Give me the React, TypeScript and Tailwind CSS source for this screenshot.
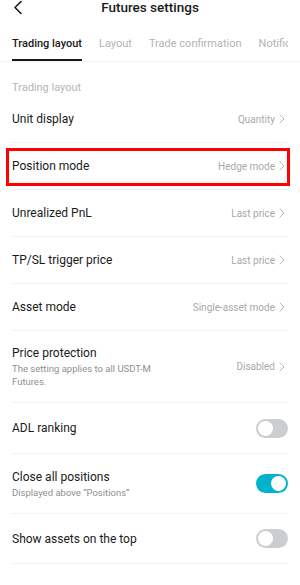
import React from "react";

const Chevron = () => (
  <svg width="6" height="10" viewBox="0 0 6 10" fill="none" className="ml-[4px] mr-[3px]">
    <path d="M1 1l4 4-4 4" stroke="#b8b8b8" strokeWidth="1" strokeLinecap="round" strokeLinejoin="round" />
  </svg>
);

const Toggle = ({ on }: { on: boolean }) => (
  <div className={`w-[32px] h-[19px] rounded-full p-[2px] flex items-center ${on ? "bg-[#00b3cc] justify-end" : "bg-[#cbcdd0] justify-start"}`}>
    <div className="w-[15px] h-[15px] rounded-full bg-white" />
  </div>
);

const NavRow = ({ label, value, boxed }: { label: string; value: string; boxed?: boolean }) => (
  <div className="relative h-[47px] flex items-center justify-between border-b border-[#f2f2f2]">
    <span className="text-[12px] text-[#1a1a1a]">{label}</span>
    <span className="flex items-center text-[10px] text-[#a9a9a9]">
      {value}
      <Chevron />
    </span>
    {boxed && <div className="absolute left-[-6px] top-[5px] w-[284px] h-[38px] border-[3px] border-[#ff0000]" />}
  </div>
);

export default function App() {
  return (
    <div className="w-[300px] h-[585px] bg-white overflow-hidden" style={{ fontFamily: "Roboto, 'Noto Sans', sans-serif" }}>
      <div className="relative h-[15px] flex items-center justify-center">
        <svg className="absolute left-[13px] top-[0px]" width="10" height="15" viewBox="0 0 10 15" fill="none">
          <path d="M8 1.5L2 7.5l6 6" stroke="#1a1a1a" strokeWidth="1.6" strokeLinecap="round" strokeLinejoin="round" />
        </svg>
        <span className="text-[13.5px] font-medium text-[#1a1a1a]">Futures settings</span>
      </div>
      <div className="mt-[12px] h-[35px] border-b border-[#f2f2f2] pl-3 pr-3">
        <div className="h-full flex items-stretch gap-[17px] whitespace-nowrap overflow-hidden">
          <div className="relative flex items-center text-[11px] font-medium text-[#1a1a1a]">
            Trading layout
            <div className="absolute left-0 right-0 bottom-0 h-[2px] bg-[#1a1a1a]" />
          </div>
          <div className="flex items-center text-[11px] text-[#b3b3b3]">Layout</div>
          <div className="flex items-center text-[11px] text-[#b3b3b3]">Trade confirmation</div>
          <div className="flex items-center text-[11px] text-[#b3b3b3]">Notifications</div>
        </div>
      </div>
      <div className="px-3">
        <div className="h-[34px] flex items-end text-[11px] text-[#b5b5b5]">Trading layout</div>
        <NavRow label="Unit display" value="Quantity" />
        <NavRow label="Position mode" value="Hedge mode" boxed />
        <NavRow label="Unrealized PnL" value="Last price" />
        <NavRow label="TP/SL trigger price" value="Last price" />
        <NavRow label="Asset mode" value="Single-asset mode" />
        <div className="h-[72px] flex items-center justify-between border-b border-[#f2f2f2]">
          <div className="flex flex-col w-[145px]">
            <span className="text-[12px] text-[#1a1a1a] leading-[16px]">Price protection</span>
            <span className="text-[9.5px] text-[#8f8f8f] leading-[13px] mt-[1px]">The setting applies to all USDT-M Futures.</span>
          </div>
          <span className="flex items-center text-[10px] text-[#a9a9a9]">
            Disabled
            <Chevron />
          </span>
        </div>
        <div className="h-[51px] flex items-center justify-between border-b border-[#f2f2f2]">
          <span className="text-[12px] text-[#1a1a1a]">ADL ranking</span>
          <Toggle on={false} />
        </div>
        <div className="h-[60px] flex items-center justify-between border-b border-[#f2f2f2]">
          <div className="flex flex-col">
            <span className="text-[12px] text-[#1a1a1a] leading-[16px]">Close all positions</span>
            <span className="text-[9.5px] text-[#8f8f8f] leading-[13px] mt-[1px]">Displayed above “Positions”</span>
          </div>
          <Toggle on />
        </div>
        <div className="h-[50px] flex items-center justify-between border-b border-[#f2f2f2]">
          <span className="text-[12px] text-[#1a1a1a]">Show assets on the top</span>
          <Toggle on={false} />
        </div>
      </div>
    </div>
  );
}
